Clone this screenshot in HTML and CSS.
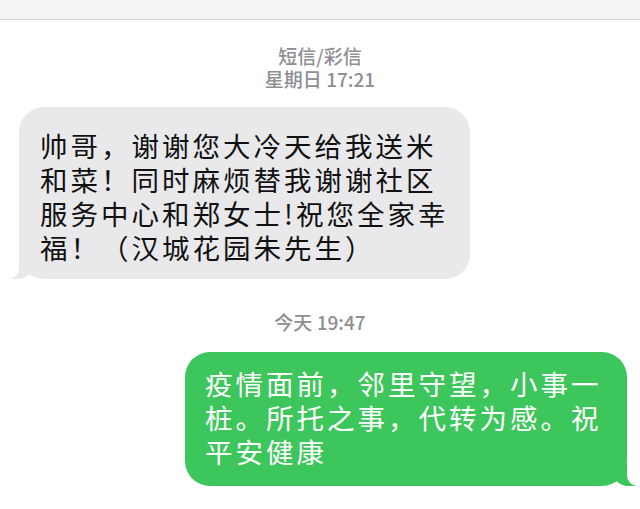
FILE: index.html
```html
<!DOCTYPE html>
<html lang="zh-CN">
<head>
  <meta charset="UTF-8">
  <meta name="viewport" content="width=device-width, initial-scale=1.0">
  <title>短信/彩信</title>
  <link rel="stylesheet" href="styles.css">
</head>
<body>
  <div class="topbar"></div>

  <div class="stamp stamp-first">
    短信/彩信<br>星期日 17:21
  </div>

  <div class="row">
    <div class="bubble incoming">
      帅哥，谢谢您大冷天给我送米<br>
      和菜！同时麻烦替我谢谢社区<br>
      服务中心和郑女士!祝您全家幸<br>
      福！（汉城花园朱先生）
    </div>
  </div>

  <div class="stamp stamp-today">今天 19:47</div>

  <div class="row row-out">
    <div class="bubble outgoing">
      疫情面前，邻里守望，小事一<br>
      桩。所托之事，代转为感。祝<br>
      平安健康
    </div>
  </div>
</body>
</html>
```

FILE: styles.css
```css
body {
  margin: 0;
  background-color: #fff;
  font-family: "Noto Sans CJK SC", "Noto Sans", sans-serif;
  overflow: hidden;
}
.topbar {
  height: 19px;
  background-color: #f4f4f4;
  border-bottom: 1px solid #d9d9d9;
}
.stamp {
  text-align: center;
  font-size: 19px;
  line-height: 23px;
  font-weight: 500;
  color: #8e8e93;
}
.stamp-first {
  padding-top: 24px;
}
.stamp-today {
  margin-top: 31px;
}
.row {
  display: flex;
  margin-top: 17px;
  padding: 0 13px 0 19px;
}
.row-out {
  justify-content: flex-end;
  margin-top: 19px;
}
.bubble {
  position: relative;
  box-sizing: border-box;
  border-radius: 25px;
  font-size: 27.5px;
  line-height: 34px;
  letter-spacing: 3px;
  white-space: nowrap;
}
.incoming {
  width: 451px;
  height: 172px;
  padding: 21px 0 0 21px;
  background-color: #e9e9eb;
  color: #111;
}
.outgoing {
  width: 442px;
  height: 134px;
  padding: 14px 0 0 20px;
  background-color: #3dc65b;
  color: #fff;
}

/* tails */
.bubble::before,
.bubble::after {
  content: '';
  position: absolute;
  bottom: 0;
  height: 22px;
}
.incoming::before {
  left: -11px;
  width: 26px;
  background-color: #e9e9eb;
  border-bottom-right-radius: 16px;
}
.incoming::after {
  left: -26px;
  width: 26px;
  background-color: #fff;
  border-bottom-right-radius: 11px;
}
.outgoing::before {
  right: -11px;
  width: 26px;
  background-color: #3dc65b;
  border-bottom-left-radius: 16px;
}
.outgoing::after {
  right: -26px;
  width: 26px;
  background-color: #fff;
  border-bottom-left-radius: 11px;
}
```
